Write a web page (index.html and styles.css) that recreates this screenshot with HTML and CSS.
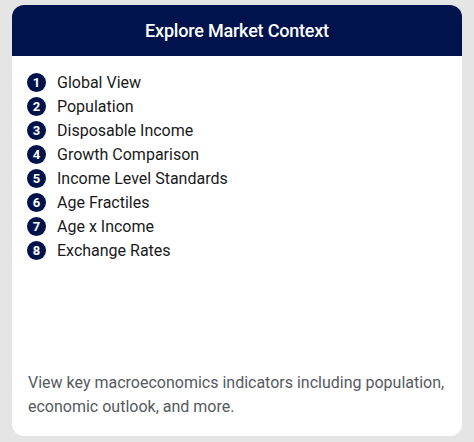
FILE: index.html
```html
<!DOCTYPE html>
<html>
<head>
<meta charset="utf-8">
<link rel="stylesheet" href="styles.css">
</head>
<body>
<div class="card">
  <div class="card-header">Explore Market Context</div>
  <div class="card-body">
    <ol class="steps">
      <li><span class="num">1</span>Global View</li>
      <li><span class="num">2</span>Population</li>
      <li><span class="num">3</span>Disposable Income</li>
      <li><span class="num">4</span>Growth Comparison</li>
      <li><span class="num">5</span>Income Level Standards</li>
      <li><span class="num">6</span>Age Fractiles</li>
      <li><span class="num">7</span>Age x Income</li>
      <li><span class="num">8</span>Exchange Rates</li>
    </ol>
    <p class="desc">View key macroeconomics indicators including population, economic outlook, and more.</p>
  </div>
</div>
</body>
</html>
```

FILE: styles.css
```css
html, body {
  margin: 0;
  padding: 0;
  background: #e5e5e5;
  font-family: Roboto, "Noto Sans", sans-serif;
}
body {
  padding: 5px 12px 6px;
}
.card {
  background: #fff;
  border-radius: 12px;
  height: 431px;
  display: flex;
  flex-direction: column;
  overflow: hidden;
}
.card-header {
  background: #00134c;
  color: #fff;
  height: 51px;
  display: flex;
  align-items: center;
  justify-content: center;
  font-size: 18px;
  font-weight: 500;
  letter-spacing: -0.2px;
}
.card-body {
  flex: 1;
  display: flex;
  flex-direction: column;
  justify-content: space-between;
  padding: 14px 16px 17px 15px;
}
.steps {
  list-style: none;
  margin: 0;
  padding: 0;
}
.steps li {
  display: flex;
  align-items: center;
  height: 24px;
  font-size: 16px;
  color: #1a1a1a;
}
.num {
  width: 19px;
  height: 19px;
  border-radius: 50%;
  background: #00134c;
  color: #fff;
  font-size: 13px;
  font-weight: 700;
  display: flex;
  align-items: center;
  justify-content: center;
  margin-right: 11px;
  flex-shrink: 0;
}
.desc {
  margin: 0 0 0 1px;
  font-size: 16px;
  line-height: 24px;
  color: #555a60;
}
```
